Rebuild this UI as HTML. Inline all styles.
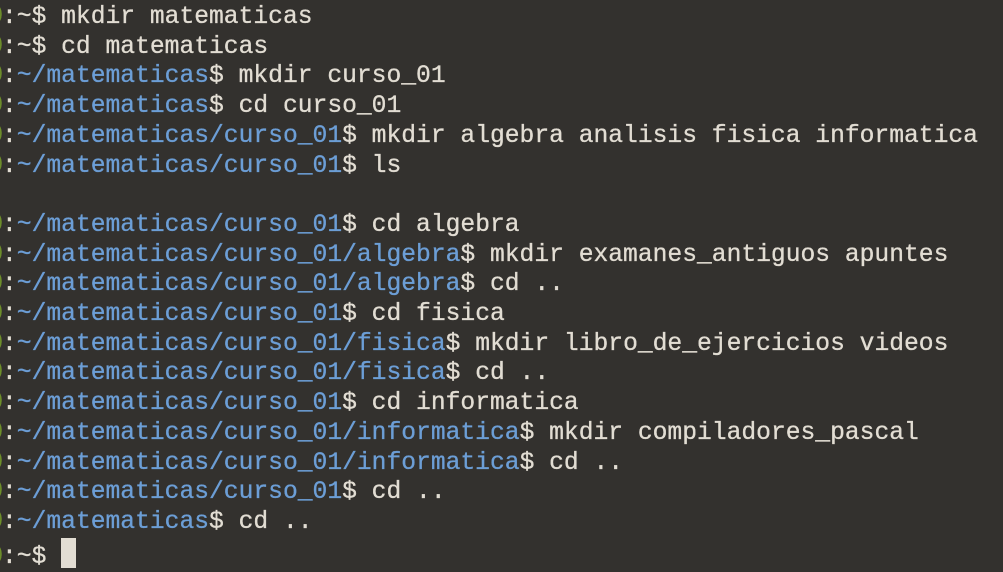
<!DOCTYPE html>
<html><head><meta charset="utf-8"><style>
html,body{margin:0;padding:0;background:#33312e;width:1003px;height:571px;overflow:hidden}
pre{margin:0;position:absolute;left:-12.8px;top:3px;font-family:"Liberation Mono",monospace;font-size:24.65px;line-height:29.7px;color:#e2ddd3;letter-spacing:0;-webkit-text-stroke:0.3px currentColor}
.g{color:#6e8f2a}.b{color:#6c9ed6}
.c{display:inline-block;width:14.8px;height:30px;background:#e2ddd3;vertical-align:-5px}
</style></head><body>
<pre><span class="g">@</span>:~$ mkdir matematicas
<span class="g">@</span>:~$ cd matematicas
<span class="g">@</span>:<span class="b">~/matematicas</span>$ mkdir curso_01
<span class="g">@</span>:<span class="b">~/matematicas</span>$ cd curso_01
<span class="g">@</span>:<span class="b">~/matematicas/curso_01</span>$ mkdir algebra analisis fisica informatica
<span class="g">@</span>:<span class="b">~/matematicas/curso_01</span>$ ls

<span class="g">@</span>:<span class="b">~/matematicas/curso_01</span>$ cd algebra
<span class="g">@</span>:<span class="b">~/matematicas/curso_01/algebra</span>$ mkdir examanes_antiguos apuntes
<span class="g">@</span>:<span class="b">~/matematicas/curso_01/algebra</span>$ cd ..
<span class="g">@</span>:<span class="b">~/matematicas/curso_01</span>$ cd fisica
<span class="g">@</span>:<span class="b">~/matematicas/curso_01/fisica</span>$ mkdir libro_de_ejercicios videos
<span class="g">@</span>:<span class="b">~/matematicas/curso_01/fisica</span>$ cd ..
<span class="g">@</span>:<span class="b">~/matematicas/curso_01</span>$ cd informatica
<span class="g">@</span>:<span class="b">~/matematicas/curso_01/informatica</span>$ mkdir compiladores_pascal
<span class="g">@</span>:<span class="b">~/matematicas/curso_01/informatica</span>$ cd ..
<span class="g">@</span>:<span class="b">~/matematicas/curso_01</span>$ cd ..
<span class="g">@</span>:<span class="b">~/matematicas</span>$ cd ..
<span class="g">@</span>:~$ <span class="c"></span></pre>
</body></html>
